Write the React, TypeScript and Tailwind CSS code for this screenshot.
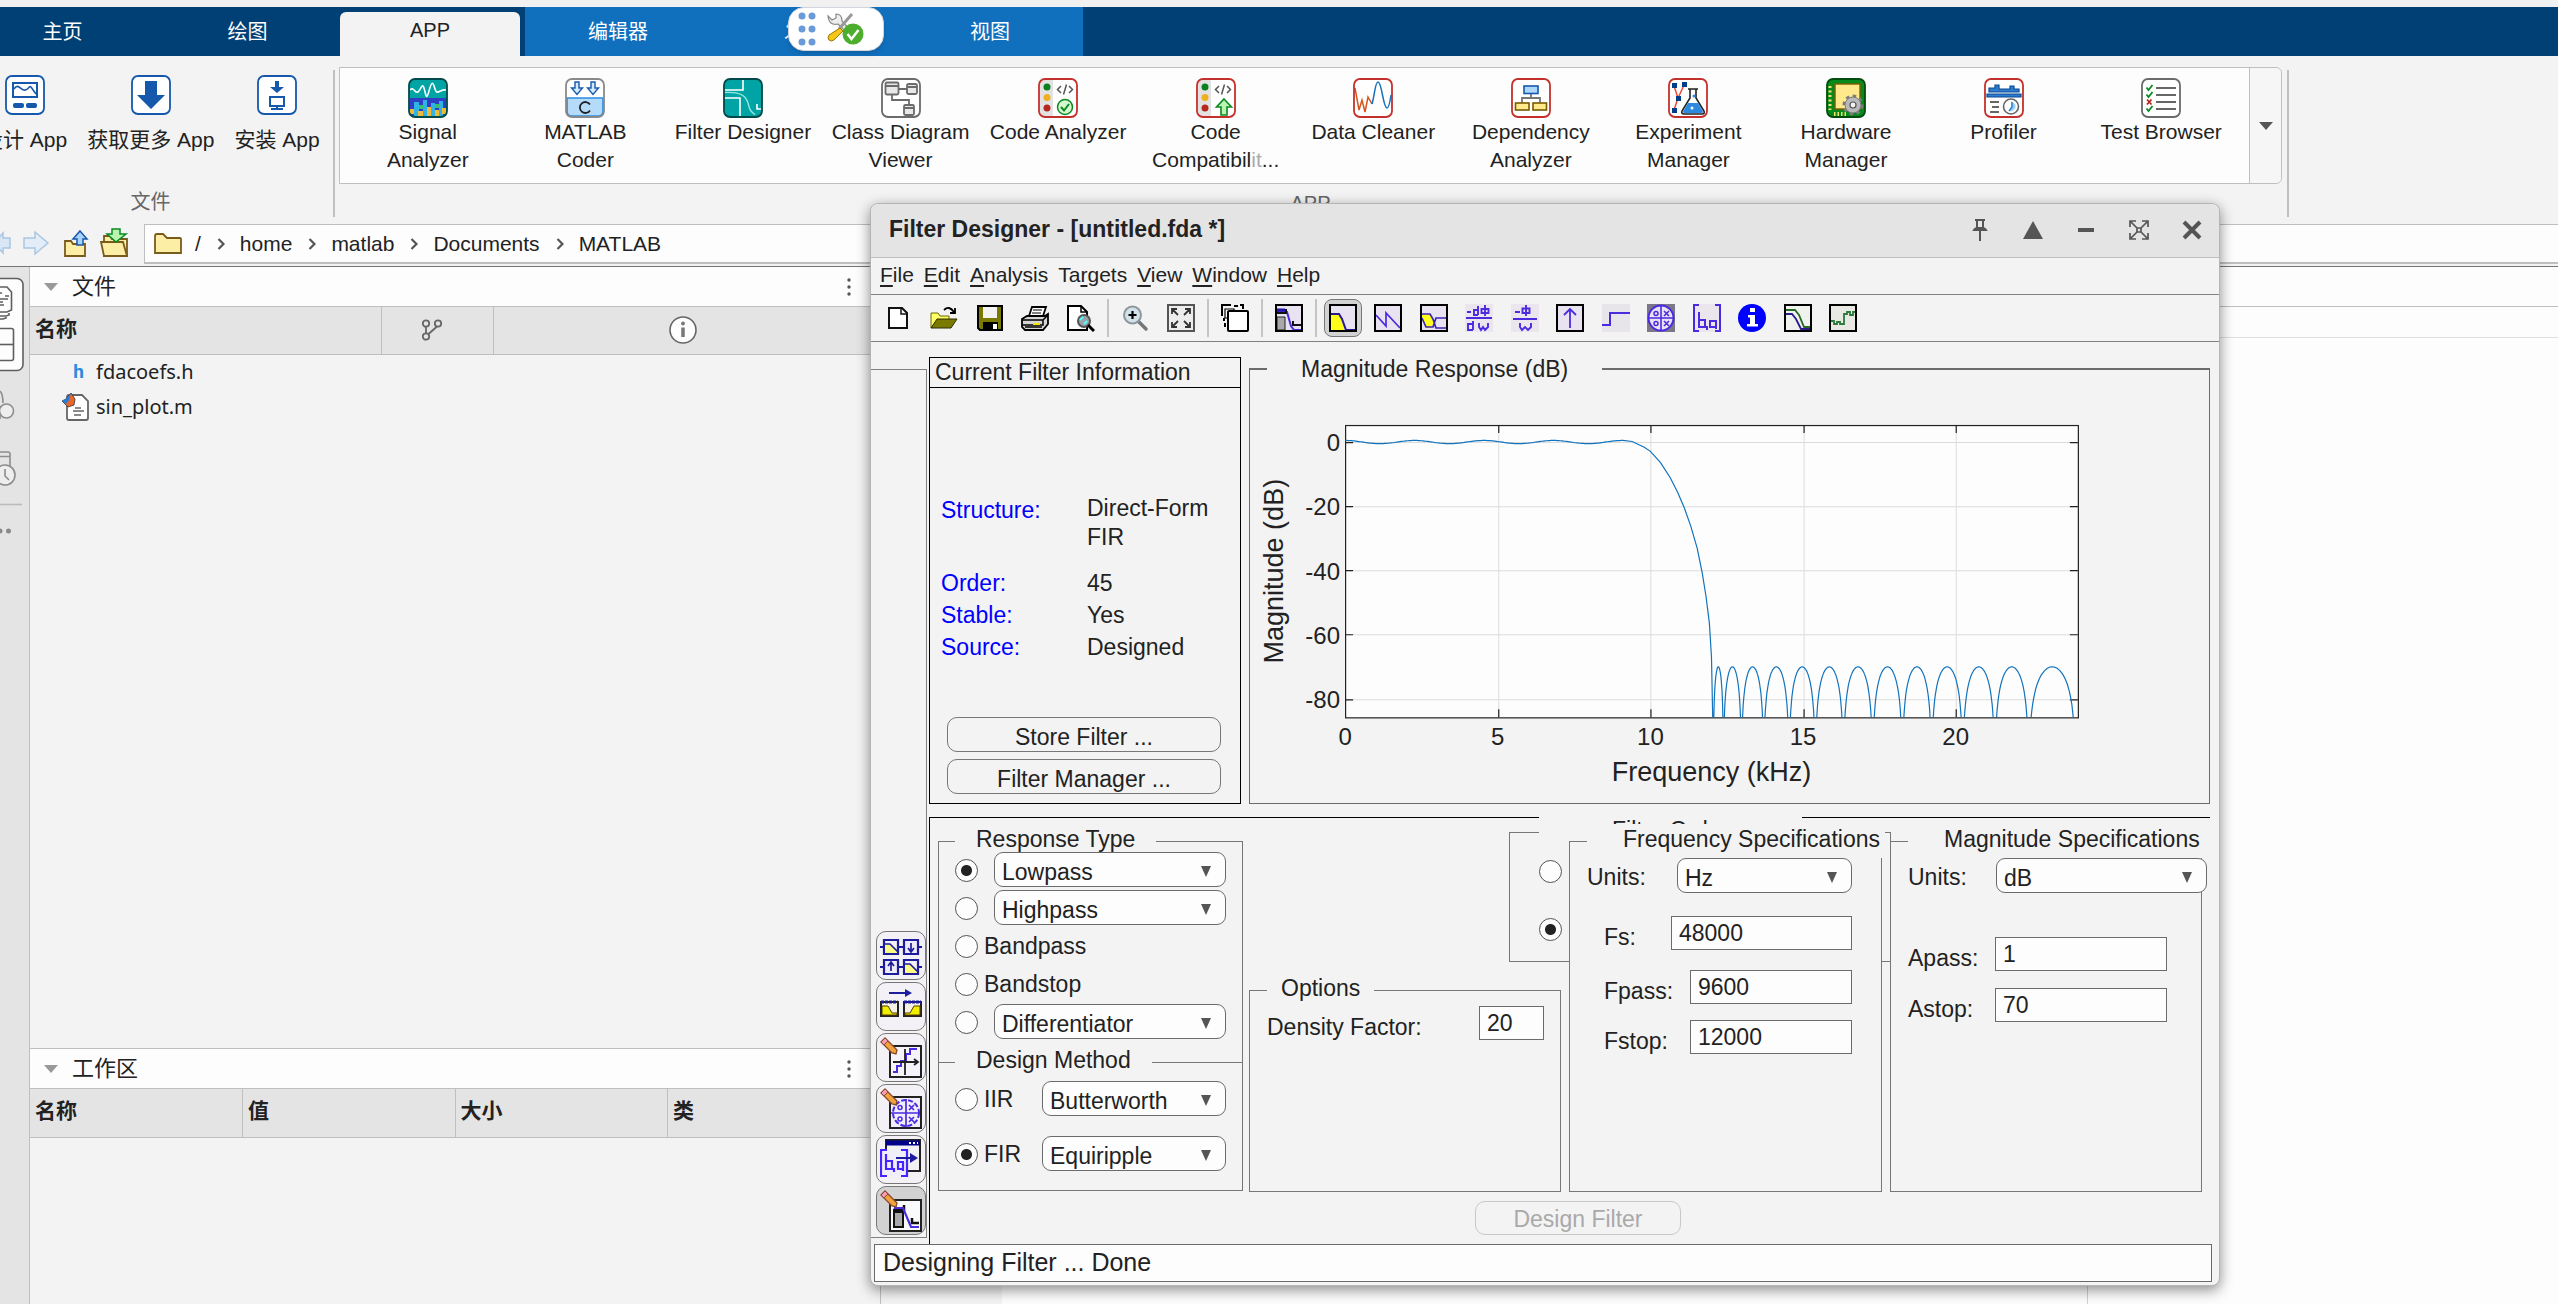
import React from "react";

type Kids = { children?: React.ReactNode };

/* ---------- gallery icons (40 x 40) ---------- */

function Tile({ stroke, fill = "#ffffff", children }: Kids & { stroke: string; fill?: string }) {
  return (
    <svg viewBox="0 0 40 40" className="size-10 shrink-0" fill="none" aria-hidden="true">
      <rect x="1" y="1" width="38" height="38" rx="6" fill={fill} />
      {children}
      <rect x="1" y="1" width="38" height="38" rx="6" stroke={stroke} strokeWidth="1.8" />
    </svg>
  );
}

const Monitor = () => (
  <Tile stroke="#1659ac">
    <rect x="8" y="8" width="24" height="14" stroke="#1659ac" strokeWidth="2" />
    <path d="M9 14c4-6 6 0 10 1s5-5 7-3l5 7" stroke="#1659ac" strokeWidth="1.6" />
    <rect x="8" y="28" width="11" height="5" rx="2" fill="#1659ac" />
    <rect x="21" y="28" width="11" height="5" rx="2" fill="#1659ac" />
  </Tile>
);

const BigArrow = () => (
  <Tile stroke="#1659ac">
    <path d="M14 6h12v14h8L20 34 6 20h8z" fill="#1659ac" />
  </Tile>
);

const Install = () => (
  <Tile stroke="#1659ac">
    <path d="M18 6h4v6h5l-7 6-7-6h5z" fill="#1659ac" />
    <rect x="13" y="22" width="14" height="9" stroke="#1659ac" strokeWidth="2" />
    <path d="M20 31v3M14 34h12" stroke="#1659ac" strokeWidth="2" />
  </Tile>
);

const SignalAnalyzer = () => (
  <Tile stroke="#01494a" fill="#00a4a4">
    <path d="M2 12c4-4 5 4 8 2s4-10 6-4 2 14 5 3 4-9 6-2 5 0 11 1" stroke="#fff" strokeWidth="1.6" />
    <path d="M2 20h36v13q0 5-5 5H7q-5 0-5-5z" fill="#2f3ec4" />
    <path d="M6 24h5v14H6zM15 22h4v16h-4zM23 25h4v13h-4zM31 23h4v15h-4z" fill="#2fb2e4" />
    <path d="M2 31h4v5H2zM10 33h5v5h-5zM19 29h4v9h-4zM27 32h4v6h-4zM34 30h4v6h-4z" fill="#efb93a" />
    <path d="M11 27h4v4h-4zM27 26h4v4h-4z" fill="#36c06e" />
  </Tile>
);

const Coder = () => (
  <Tile stroke="#8a8a8a">
    <path d="M2 20h36v13q0 5-5 5H7q-5 0-5-5z" fill="#b4dcfa" stroke="#2b8ae0" strokeWidth="1.6" />
    <path d="M10 4h4v6h3.5L12 16.5 6.5 10H10zM26 4h4v6h3.5L28 16.5 22.5 10H26z" fill="#d4e9fb" stroke="#1659ac" strokeWidth="1.4" />
    <path d="M25 26.5a5.5 5.5 0 1 0 0 6" stroke="#222" strokeWidth="1.8" />
  </Tile>
);

const FilterApp = () => (
  <Tile stroke="#01494a" fill="#00a4a4">
    <path d="M1 12h19V2" stroke="#fff" strokeWidth="1.6" />
    <path d="M1 20h16v19" stroke="#fff" strokeWidth="1.6" />
    <path d="M1 14.5c20-1 23 5 25 14 1 5 3 6 6 8" stroke="#8fe8e4" strokeWidth="1.4" />
    <path d="M34 26v5h5" stroke="#fff" strokeWidth="1.6" />
  </Tile>
);

const ClassDiagram = () => (
  <Tile stroke="#6b6b6b">
    <g stroke="#6b6b6b" strokeWidth="1.8">
      <rect x="4.5" y="4.5" width="13" height="12" rx="1.5" fill="#e8e8e8" />
      <rect x="26" y="6" width="10" height="10" rx="1.5" fill="#e8e8e8" />
      <rect x="23" y="27" width="10" height="10" rx="1.5" fill="#e8e8e8" />
      <path d="M4.500 8h13M26 9h10M23 30h10M18 11h8M11 17v5h17v5" />
    </g>
  </Tile>
);

const Lights = () => (
  <>
    <path d="M6 2h9v36H6q-4-1-4-5V7q0-4 4-5z" fill="#e2e2e2" />
    <circle cx="9" cy="9" r="3.5" fill="#0a7f1f" />
    <circle cx="9" cy="19.5" r="3.5" fill="#efb020" />
    <circle cx="9" cy="30" r="3.5" fill="#b5281f" />
    <path d="M23 8l-3.500 3.500L23 15M31 8l3.500 3.500L31 15M28.500 6.500l-3 10" stroke="#555" strokeWidth="1.5" />
  </>
);

const CodeAnalyzer = () => (
  <Tile stroke="#c4312c">
    <Lights />
    <circle cx="27" cy="29" r="7.5" fill="#d5f7d0" stroke="#0a8a22" strokeWidth="1.5" />
    <path d="M23 29l3 3.500 5-6.500" stroke="#0a8a22" strokeWidth="2" />
  </Tile>
);

const CodeCompat = () => (
  <Tile stroke="#c4312c">
    <Lights />
    <path d="M28 21l7.500 8H31v8h-6v-8h-4.500z" fill="#b9f5b0" stroke="#0a8a22" strokeWidth="1.6" />
  </Tile>
);

const DataCleaner = () => (
  <Tile stroke="#c4312c">
    <path d="M2 10l4 22 3-10 3 12 3-15 4 7" stroke="#d8531a" strokeWidth="1.5" />
    <path d="M19 26c3-10 3-22 6-22 4 0 5 26 9 26 2 0 3-6 4-13" stroke="#1672ba" strokeWidth="1.5" />
  </Tile>
);

const Dependency = () => (
  <Tile stroke="#c4312c">
    <path d="M20 15v5M11 25v-5h18v5" stroke="#777" strokeWidth="1.8" />
    <rect x="13" y="8" width="14" height="7.5" fill="#aed8fb" stroke="#1659ac" strokeWidth="1.6" />
    <rect x="4.5" y="25" width="13.5" height="7" fill="#ffe98a" stroke="#7a5b00" strokeWidth="1.6" />
    <rect x="22" y="25" width="13.5" height="7" fill="#ffe98a" stroke="#7a5b00" strokeWidth="1.6" />
  </Tile>
);

const Experiment = () => (
  <Tile stroke="#c4312c">
    <path d="M6 8l4 12 7-15M10 20L6 32" stroke="#f04a32" strokeWidth="1.5" />
    <path d="M4 5h5v5H4zM14 4h5v5h-5zM8 18h5v5H8zM4 30h5v5H4z" fill="#003f87" />
    <path d="M20 11h10M22 11v9l-8 13q-1 3 2 3h18q3 0 2-3l-8-13v-9" fill="#fff" stroke="#222" strokeWidth="1.6" />
    <path d="M20 25h10l5 8.500q0 1.500-1.500 1.500h-17q-1.500 0-1.500-1.500z" fill="#2b8ae0" />
    <circle cx="26" cy="18" r="1.5" fill="#2b8ae0" />
    <circle cx="24" cy="30" r="1.5" fill="#fff" />
  </Tile>
);

const Gear = () => (
  <>
    <circle cx="27" cy="27" r="8" stroke="#7c7c7c" strokeWidth="5" strokeDasharray="3.1 3.1" />
    <circle cx="27" cy="27" r="8" fill="#b9b9b9" stroke="#7c7c7c" strokeWidth="1" />
    <circle cx="27" cy="27" r="3" fill="#f2f2f2" stroke="#555" strokeWidth="1.2" />
  </>
);

const Hardware = () => (
  <Tile stroke="#024d0d" fill="#078a1c">
    <rect x="9" y="6" width="25" height="25" fill="#ffe98a" stroke="#7a5b00" strokeWidth="1.4" />
    <path d="M4 8v24" stroke="#f2e36a" strokeWidth="3" strokeDasharray="2 2.5" />
    <path d="M8 36h14" stroke="#f2e36a" strokeWidth="4" strokeDasharray="1.5 2" />
    <Gear />
  </Tile>
);

const Profiler = () => (
  <Tile stroke="#c4312c">
    <path d="M3 19v-3h34v3zM5 14v-4h6V7h4v4h11V8h4v3h5v3z" fill="#2b7dd0" stroke="#0c4a92" strokeWidth="1.2" />
    <path d="M6 24h9M8 29h7M6 34h9" stroke="#666" strokeWidth="1.8" />
    <circle cx="27" cy="28.5" r="7.5" fill="#fff" stroke="#666" strokeWidth="1.6" />
    <path d="M27 23v6l-2 4a5 5 0 0 0 6-7z" fill="#9dd0f8" />
    <path d="M28 24v5l-3 4" stroke="#2b7dd0" strokeWidth="1.4" />
  </Tile>
);

const TestBrowser = () => (
  <Tile stroke="#6b6b6b">
    <path d="M15 10h20M15 17h20M15 24h20M15 31h20" stroke="#666" strokeWidth="1.8" />
    <path d="M5.500 9.500l2 2.500 4-5M5.500 16.500l2 2.500 4-5M5.500 30.500l2 2.500 4-5" stroke="#0a8a22" strokeWidth="1.8" />
    <path d="M6 21.500l4.500 5M10.500 21.500l-4.500 5" stroke="#b5281f" strokeWidth="1.8" />
  </Tile>
);

/* ---------- filter designer toolbar icons (28 x 28) ---------- */

function Ico({ children }: Kids) {
  return (
    <svg viewBox="0 0 28 28" className="size-7" fill="none" aria-hidden="true">
      {children}
    </svg>
  );
}

const P = "#4a2be0";
const Framed = ({ children, fill = "#e9e3f1" }: Kids & { fill?: string }) => (
  <Ico>
    <rect x="1" y="1" width="26" height="26" fill={fill} />
    {children}
    <rect x="1" y="1" width="26" height="26" stroke="#000" strokeWidth="2" />
  </Ico>
);

const NewIcon = () => (
  <Ico>
    <path d="M5 4h13l5 5v15H5z" fill="#fff" stroke="#111" strokeWidth="2" />
    <path d="M17 4v6h6" stroke="#111" strokeWidth="1.5" />
  </Ico>
);
const OpenIcon = () => (
  <Ico>
    <path d="M1 24V9h7l2 3h9v4H8z" fill="#ffff66" stroke="#6b6b00" />
    <path d="M1 24l6-9h20l-6 9z" fill="#7a7a00" stroke="#2d2d00" />
    <path d="M14 6q5-5 10 2M25 4v5h-5" stroke="#000" strokeWidth="1.8" />
  </Ico>
);
const SaveIcon = () => (
  <Ico>
    <path d="M2 2h24v24H4l-2-2z" fill="#7a7a00" stroke="#000" strokeWidth="2" />
    <path d="M7 3h14v11H7z" fill="#f3f3f3" />
    <path d="M7 18h15v9H7z" fill="#000" />
    <path d="M17 20h4v5h-4z" fill="#fff" />
  </Ico>
);
const PrintIcon = () => (
  <Ico>
    <path d="M8 12l3-9h14l-3 9z" fill="#fff" stroke="#000" strokeWidth="1.8" />
    <path d="M12 6h9M11 9h9" stroke="#000" />
    <path d="M1 15l5-3h18l3-2v10l-5 6H4l-3-3z" fill="#d5d5d5" stroke="#000" strokeWidth="1.8" />
    <path d="M1 16h21v5H1M22 16l5-5M4 23h17" stroke="#000" strokeWidth="1.5" />
    <path d="M12 19h7v2h-7z" fill="#f3e600" />
  </Ico>
);
const PreviewIcon = () => (
  <Ico>
    <path d="M1 2h13l6 6v18H1z" fill="#fff" stroke="#000" strokeWidth="2" />
    <path d="M14 2v6h6" stroke="#000" strokeWidth="1.5" />
    <circle cx="17" cy="17" r="6" fill="#9aa4a8" stroke="#555" strokeWidth="2" />
    <path d="M13 16l3-3M17 20l3-3" stroke="#5ff" strokeWidth="2" />
    <path d="M21 21l6 6" stroke="#000" strokeWidth="3" />
  </Ico>
);
const ZoomIcon = () => (
  <Ico>
    <path d="M17 17l8 8" stroke="#777" strokeWidth="3.5" strokeLinecap="round" />
    <circle cx="11.5" cy="11" r="8.5" fill="#d3e2ea" stroke="#8d979c" strokeWidth="2" />
    <path d="M11.500 7v8M7.500 11h8" stroke="#000" strokeWidth="2.2" />
  </Ico>
);
const FitIcon = () => (
  <Ico>
    <rect x="1" y="1" width="26" height="26" fill="#ececec" stroke="#555" strokeWidth="2" />
    <path d="M5 10V5h5M18 5h5v5M23 18v5h-5M10 23H5v-5M5 5l6 6M23 5l-6 6M23 23l-6-6M5 23l6-6" stroke="#333" strokeWidth="1.8" />
  </Ico>
);
const StackIcon = () => (
  <Ico>
    <path d="M1 12V1h9M13 2h4M19 1h3v4M3 14v3M4 19v4" stroke="#000" strokeWidth="2" />
    <path d="M4 5h9v3H7v6H4z" fill="#fff" stroke="#000" strokeWidth="1.2" />
    <rect x="7" y="7" width="20" height="20" rx="1" fill="#fff" stroke="#000" strokeWidth="2" />
  </Ico>
);
const SpecIcon = () => (
  <Framed>
    <path d="M2 8h10l4 14 3 4h7" stroke={P} strokeWidth="2" />
    <path d="M2 13h8v13H2z" fill="#a8a8a8" stroke="#222" />
    <path d="M2 9h9V5M18 17v4h8" stroke="#111" strokeWidth="2" />
    <path d="M2 6h8" stroke="#1e16a0" strokeWidth="3" />
  </Framed>
);
const MagIcon = () => (
  <Framed>
    <path d="M2 10h7l3 4 3 12H2z" fill="#ffff1a" />
    <path d="M2 10h8l3 5 4 11h9" stroke="#2a1a90" strokeWidth="2" />
  </Framed>
);
const PhaseIcon = () => (
  <Framed>
    <path d="M2 11l10 11V9l14 15" stroke={P} strokeWidth="1.7" />
  </Framed>
);
const MagPhaseIcon = () => (
  <Framed>
    <path d="M2 10h8l4 8-3 6H6L2 16z" fill="#ffff1a" />
    <path d="M2 10h8l3 5 3 9h10M2 14l4 9h7l3-9h10" stroke="#3b22b8" strokeWidth="1.7" />
  </Framed>
);
const GroupDelayIcon = () => (
  <Ico>
    <rect width="28" height="28" fill="#ebe6ee" />
    <path d="M1 14h26" stroke={P} strokeWidth="2" />
    <path d="M2 8h4M13 2v9M13 6H9v5h4M20 1v11M16.500 5h7v4h-7zM8 17v9M8 20H3v6h5M14 19v4l2 3 2-3 2 3 3-3v-4" stroke={P} strokeWidth="1.9" />
  </Ico>
);
const PhaseDelayIcon = () => (
  <Ico>
    <rect width="28" height="28" fill="#ebe6ee" />
    <path d="M2 15h24" stroke={P} strokeWidth="2" />
    <path d="M4 8h5M15 1v11M11.500 4.500h7v4.500h-7zM9 19v4l2 3 3-3 3 3 3-3v-4" stroke={P} strokeWidth="1.9" />
  </Ico>
);
const ImpulseIcon = () => (
  <Framed>
    <path d="M14 24V5M8 11l6-6 6 6" stroke={P} strokeWidth="1.8" />
  </Framed>
);
const StepIcon = () => (
  <Ico>
    <rect width="28" height="28" fill="#e8e5ea" />
    <path d="M0 21h8V9h20" stroke={P} strokeWidth="2" />
  </Ico>
);
const PoleZeroIcon = () => (
  <Ico>
    <rect width="28" height="28" fill="#7b7788" />
    <circle cx="14" cy="14" r="12.5" fill="#e9e3f1" stroke={P} strokeWidth="2" />
    <path d="M14 1v26M1 14h26M17 7l5 5M22 7l-5 5M17 17l5 5M22 17l-5 5" stroke={P} strokeWidth="1.6" />
    <circle cx="9" cy="9.5" r="2" stroke={P} strokeWidth="1.5" />
    <circle cx="9" cy="19.5" r="2" stroke={P} strokeWidth="1.5" />
  </Ico>
);
const CoefIcon = () => (
  <Ico>
    <rect width="28" height="28" fill="#ebe6ee" />
    <path d="M6 1H1v26h5M22 1h5v26h-5M6 8v15h6v-7H6M14 22v4M24 17h-7v6h6v-6M23 17v8" stroke={P} strokeWidth="2" />
  </Ico>
);
const InfoIcon = () => (
  <Ico>
    <circle cx="14" cy="14" r="14" fill="#0000fe" />
    <path d="M12 4h5v4h-5zM10 11h7v9h3v2.500H9V20h3v-6.500h-2z" fill="#fff" />
  </Ico>
);
const RoundoffIcon = () => (
  <Framed fill="#f0f2ee">
    <path d="M2 6h9l4 5 5 12h6" stroke="#246b24" strokeWidth="1.8" />
    <path d="M2 10h6l4 5 5 10h9" stroke="#2a1a90" strokeWidth="1.8" />
  </Framed>
);
const NoiseIcon = () => (
  <Framed fill="#e9e9e4">
    <path d="M2 17h3v3h3v-2h3v2h4V10h3V8h3v3h3V8h2" stroke="#2c7a3c" strokeWidth="1.8" />
  </Framed>
);

/* ---------- sidebar icons (42 x 42) ---------- */

const Pencil = () => (
  <>
    <path d="M1 5l4-4 12 12-1 4-4-1z" fill="#f0a23c" stroke="#8a4a30" strokeWidth="1.3" />
    <path d="M1 5l4-4 3 3-4 4z" fill="#f59ab0" stroke="#8a4a30" />
  </>
);
const Side = ({ children }: Kids) => (
  <svg viewBox="0 0 42 42" className="size-[42px]" fill="none" aria-hidden="true">
    {children}
  </svg>
);
const N = "#1c1c9c";
const Multirate = () => (
  <Side>
    <path d="M0 12h42M0 32h42" stroke={N} strokeWidth="2" />
    <path d="M4 5h14v14H4zM24 25h14v14H24z" fill="#f3f0f8" stroke={N} strokeWidth="2.2" />
    <path d="M5 9h5l7 7v2H5zM25 29h5l7 7v2H25z" fill="#fbfb86" />
    <path d="M24 5h14v14H24zM4 25h14v14H4z" fill="#eeebfa" stroke={N} strokeWidth="2.2" />
    <path d="M4 9h6l8 8M24 29h6l8 8M31 8v8M28 13l3 4 3-4M11 36v-8M8 31l3-4 3 4" stroke={N} strokeWidth="1.7" />
  </Side>
);
const Transform = () => (
  <Side>
    <path d="M9 7h17" stroke={N} strokeWidth="2" />
    <path d="M25 3l7 4-7 4z" fill={N} />
    <path d="M1 16h17v14H1zM24 16h17v14H24z" fill="#f5f2e4" stroke="#222" strokeWidth="2" />
    <path d="M2 20h6l4 7h5v2H2zM40 20h-6l-4 7h-5v2h15z" fill="#eef000" stroke="#5a3a00" />
    <path d="M1 16h17M24 16h17" stroke={N} strokeWidth="3" strokeDasharray="3 1" />
  </Side>
);
const Quantize = () => (
  <Side>
    <rect x="10" y="9" width="31" height="31" fill="#f5f3fb" stroke="#222" strokeWidth="2" />
    <path d="M13 35h4v-6h4v-5h5v-7h4v-5h7" stroke={P} strokeWidth="2" />
    <path d="M13 25h25M25 38V12M34 22l4 3-4 3" stroke="#222" strokeWidth="1.8" />
    <Pencil />
  </Side>
);
const PzEditor = () => (
  <Side>
    <rect x="10" y="9" width="31" height="31" fill="#f1eefb" stroke="#222" strokeWidth="2" />
    <circle cx="26" cy="25" r="13" stroke={P} strokeWidth="2" strokeDasharray="5 2" />
    <path d="M26 11v28M11 25h29M29 17l5 5M34 17l-5 5M29 29l5 5M34 29l-5 5" stroke={P} strokeWidth="1.7" />
    <circle cx="20" cy="19.5" r="2" stroke={P} strokeWidth="1.5" />
    <circle cx="20" cy="31" r="2" stroke={P} strokeWidth="1.5" />
    <Pencil />
  </Side>
);
const Import = () => (
  <Side>
    <rect x="6" y="1" width="34" height="31" fill="#f1f1f4" stroke="#222" strokeWidth="2" />
    <path d="M6 4h34" stroke="#00008a" strokeWidth="5" />
    <path d="M29 4h2M33 4h2M37 4h1" stroke="#fff" strokeWidth="2" />
    <path d="M1 11h26v26H1z" fill="#f1eefb" />
    <path d="M7 11H1v26h6M21 11h6v26h-6M6 15v15h6v-8H6M14 29v4M24 23h-6v7h5v-7M23 23v9" stroke="#4524ff" strokeWidth="2.2" />
    <path d="M16 19h16" stroke={N} strokeWidth="2" />
    <path d="M30 14l8 5-8 5z" fill={N} />
  </Side>
);
const DesignIcon = () => (
  <Side>
    <rect x="10" y="10" width="31" height="31" fill="#fafafc" stroke="#222" strokeWidth="2" />
    <path d="M14 22h9v15h-9z" fill="#aaa" stroke="#111" strokeWidth="2" />
    <path d="M13 20h11v-5M32 28v5h7" stroke="#111" strokeWidth="2.5" />
    <path d="M14 18h9l8 19h8" stroke={P} strokeWidth="2.2" />
    <Pencil />
  </Side>
);

/* ---------- data ---------- */

const tabs = ["主页", "绘图", "APP", "编辑器", "发布", "视图"];

const apps: [() => React.ReactElement, string, string?][] = [
  [SignalAnalyzer, "Signal", "Analyzer"],
  [Coder, "MATLAB", "Coder"],
  [FilterApp, "Filter Designer"],
  [ClassDiagram, "Class Diagram", "Viewer"],
  [CodeAnalyzer, "Code Analyzer"],
  [CodeCompat, "Code", "Compatibilit..."],
  [DataCleaner, "Data Cleaner"],
  [Dependency, "Dependency", "Analyzer"],
  [Experiment, "Experiment", "Manager"],
  [Hardware, "Hardware", "Manager"],
  [Profiler, "Profiler"],
  [TestBrowser, "Test Browser"],
];

const crumbs = ["/", "home", "matlab", "Documents", "MATLAB"];

/* ---------- desktop parts ---------- */

function TabBar() {
  return (
    <nav className="relative flex h-14 shrink-0 border-t-[7px] border-[#f1f1f1] bg-[#004074] text-[20px] text-white">
      <div className="-ml-[30px] flex">
        {tabs.map((t, i) =>
          t === "APP" ? (
            <button key={t} className="mt-[5px] mr-[5px] w-[180px] rounded-t-md bg-[#f3f3f3] pb-[9px] text-[#222]">
              {t}
            </button>
          ) : (
            <button key={t} className={i > 2 ? "w-[186px] bg-[#1170be]" : "w-[185px]"}>
              {t}
            </button>
          )
        )}
      </div>
      <div className="absolute top-0 left-[788px] flex h-11 w-24 items-center gap-2 rounded-2xl border border-gray-300 bg-white pl-2 shadow-md">
        <svg viewBox="0 0 20 36" className="h-9 w-5 shrink-0" fill="#6a9bd8" aria-hidden="true">
          {[5, 18, 31].map((y) => (
            <React.Fragment key={y}>
              <circle cx="5" cy={y} r="3.5" />
              <circle cx="15" cy={y} r="3.5" />
            </React.Fragment>
          ))}
        </svg>
        <svg viewBox="0 0 40 34" className="h-[34px] w-10 shrink-0" fill="none" aria-hidden="true">
          <path d="M3 4l4 4 4-2V2q6 0 6 7l9 10-3 3L13 12q-9 2-10-8z" fill="#eee" stroke="#888" strokeWidth="1.2" />
          <path d="M27 2l-13 15" stroke="#999" strokeWidth="3" />
          <path d="M15 16l3 3-9 9q-3 2-5 0t0-5z" fill="#f5c518" stroke="#9a7a00" />
          <circle cx="28" cy="22" r="10.5" fill="#4cae2c" />
          <path d="M22.500 22l4 5 7-9" stroke="#fff" strokeWidth="2.5" />
        </svg>
      </div>
    </nav>
  );
}

function FileButton({ icon, label }: { icon: React.ReactNode; label: string }) {
  return (
    <button className="flex flex-col items-center gap-[11px] whitespace-nowrap text-[21px] leading-7">
      {icon}
      {label}
    </button>
  );
}

function Toolstrip() {
  return (
    <div className="flex h-[166px] shrink-0 bg-[#f3f3f3] text-[21px]">
      <div className="-ml-[18px] flex w-[351px] shrink-0 flex-col items-center">
        <div className="flex w-full gap-5 pt-[19px]">
          <FileButton icon={<Monitor />} label="设计 App" />
          <FileButton icon={<BigArrow />} label="获取更多 App" />
          <FileButton icon={<Install />} label="安装 App" />
        </div>
        <div className="mt-auto mb-[6px] pr-[14px] text-[20px] leading-7 text-[#666]">文件</div>
      </div>
      <div className="mt-[14px] h-[147px] w-0.5 shrink-0 bg-[#bfbfbf]" />
      <div className="flex w-[1947px] shrink flex-col pt-[11px] pl-1">
        <div className="flex h-[117px] rounded-r-md border border-[#bfbfbf] bg-[#fdfdfd]">
          <div className="flex flex-1 px-[9px]">
            {apps.map(([Icon, a, b]) => (
              <button key={a} className="flex flex-1 basis-0 flex-col items-center pt-[10px] leading-7 whitespace-nowrap">
                <Icon />
                <span>{a}</span>
                {b === "Compatibilit..." ? (
                  <span>
                    Compatibil<span className="text-[#aaa]">it</span>...
                  </span>
                ) : (
                  <span>{b}</span>
                )}
              </button>
            ))}
          </div>
          <button className="flex w-8 items-center justify-center rounded-r-md border-l border-[#bfbfbf] bg-[#f6f6f6]" aria-label="更多">
            <svg viewBox="0 0 14 8" className="h-2 w-[14px]" fill="#555" aria-hidden="true">
              <path d="M0 0h14L7 8z" />
            </svg>
          </button>
        </div>
        <div className="pt-[5px] text-center text-[20px] leading-7 text-[#666]">APP</div>
      </div>
      <div className="mt-[14px] ml-[5px] h-[147px] w-0.5 shrink-0 bg-[#bfbfbf]" />
    </div>
  );
}

const Folder = () => (
  <svg viewBox="0 0 30 24" className="h-6 w-[30px] shrink-0" fill="none" aria-hidden="true">
    <path d="M2 4q0-2 2-2h6l4 4h13q1 0 1 1v14H2z" fill="#fdeea6" stroke="#7a5b1c" strokeWidth="1.8" />
  </svg>
);

function PathBar() {
  return (
    <div className="flex h-[45px] shrink-0 items-center border-b border-[#757575] bg-[#f3f3f3] text-[21px]">
      <svg viewBox="0 0 130 32" className="h-8 w-[130px] shrink-0" fill="none" aria-hidden="true">
        <path d="M-6 15L3 5v5h7v10H3v5z" fill="#d9e7f4" stroke="#a9c6e4" strokeWidth="1.5" />
        <path d="M24 10h11V4l13 11-13 11v-6H24z" fill="#e2edf7" stroke="#a9c6e4" strokeWidth="1.5" />
        <path d="M65 13h6l2 3h12v12H65z" fill="#fdeea6" stroke="#7a5b1c" strokeWidth="1.8" />
        <path d="M80 3l7 8h-4v6h-6v-6h-4z" fill="#a8d2fa" stroke="#1659ac" strokeWidth="1.5" />
        <path d="M104 28V8h6l2 3h15v17z" fill="#fdeea6" stroke="#7a5b1c" strokeWidth="1.8" />
        <path d="M104 28l-3-14h22l4 14z" fill="#fdeea6" stroke="#7a5b1c" strokeWidth="1.8" />
        <path d="M112 1h8v5h6l-10 8-9-8h5z" fill="#b9f5b0" stroke="#0a8a22" strokeWidth="1.5" />
      </svg>
      <div className="ml-[14px] flex h-10 flex-1 items-center border-t border-b-2 border-l border-[#bfbfbf] bg-[#fdfdfd] pl-2">
        <Folder />
        <ol className="flex items-center pl-3">
          {crumbs.map((c, i) => (
            <li key={c} className="flex items-center">
              {i > 0 && (
                <svg viewBox="0 0 8 12" className="mr-[15px] ml-4 h-3 w-2" fill="none" aria-hidden="true">
                  <path d="M1.500 1l5 5-5 5" stroke="#555" strokeWidth="2.2" />
                </svg>
              )}
              <a href="#" className="leading-7">
                {c}
              </a>
            </li>
          ))}
        </ol>
      </div>
    </div>
  );
}

function PanelHead({ title }: { title: string }) {
  return (
    <div className="flex h-10 shrink-0 items-center border-b border-[#bfbfbf] bg-[#fdfdfd] pr-[29px] pl-[14px] text-[22px]">
      <svg viewBox="0 0 14 8" className="h-2 w-[14px]" fill="#999" aria-hidden="true">
        <path d="M0 0h14L7 8z" />
      </svg>
      <h2 className="ml-[14px] flex-1">{title}</h2>
      <button aria-label={title + "菜单"}>
        <svg viewBox="0 0 4 20" className="h-5 w-1" fill="#555" aria-hidden="true">
          <circle cx="2" cy="3" r="1.7" />
          <circle cx="2" cy="10" r="1.7" />
          <circle cx="2" cy="17" r="1.7" />
        </svg>
      </button>
    </div>
  );
}

const BranchIcon = () => (
  <svg viewBox="0 0 24 24" className="inline size-6" fill="none" stroke="#666" strokeWidth="1.8" aria-hidden="true">
    <circle cx="6" cy="5.5" r="3.2" />
    <circle cx="18" cy="5.5" r="3.2" />
    <circle cx="6" cy="18.5" r="3.2" />
    <path d="M6 9v6M17 8.500L8.500 16" />
  </svg>
);

function FilesPanel() {
  return (
    <section className="flex flex-1 flex-col">
      <PanelHead title="文件" />
      <table className="w-full table-fixed">
        <thead>
          <tr className="h-[47px] border-b border-[#bfbfbf] bg-[#e4e4e4] text-[21px]">
            <th className="w-[351px] border-r border-[#bfbfbf] pb-1 pl-[5px] text-left">名称</th>
            <th className="w-[112px] border-r border-[#bfbfbf] pr-[10px] pb-1">
              <BranchIcon />
            </th>
            <th className="pr-2 pb-1">
              <svg viewBox="0 0 28 28" className="inline size-7" fill="none" aria-hidden="true">
                <circle cx="14" cy="14" r="13" fill="#fdfdfd" stroke="#666" strokeWidth="1.6" />
                <path d="M14 11.500V21" stroke="#777" strokeWidth="3.5" />
                <circle cx="14" cy="7.5" r="1.9" fill="#777" />
              </svg>
            </th>
          </tr>
        </thead>
        <tbody className="font-['Noto_Sans',sans-serif] text-[20px]">
          <tr className="h-[35px]">
            <td className="pl-8">
              <div className="flex items-center gap-[7px]">
                <span className="w-[27px] pl-[6px] text-center font-['Roboto',sans-serif] text-[19px] font-bold text-[#2b8ae0]">h</span>
                fdacoefs.h
              </div>
            </td>
            <td />
            <td />
          </tr>
          <tr className="h-[35px]">
            <td className="pl-8">
              <div className="flex items-center gap-[7px]">
                <svg viewBox="0 0 27 28" className="h-7 w-[27px]" fill="none" aria-hidden="true">
                  <path d="M5 4q0-2 2-2h13l6 6v17q0 2-2 2H7q-2 0-2-2z" fill="#fff" stroke="#666" strokeWidth="1.8" />
                  <path d="M13 15h6M11 18h11M12 22h7" stroke="#666" strokeWidth="1.6" />
                  <path d="M0 8l4-2 5-6 4 6-1 6-6 2z" fill="#e8662a" stroke="#333" strokeWidth="0.8" />
                  <path d="M0 8l4-2 5-6-2 7-3 4z" fill="#1f7fe0" />
                </svg>
                sin_plot.m
              </div>
            </td>
            <td />
            <td />
          </tr>
        </tbody>
      </table>
    </section>
  );
}

function WorkspacePanel() {
  return (
    <section className="h-[256px] border-t border-[#bfbfbf]">
      <PanelHead title="工作区" />
      <table className="w-full table-fixed">
        <thead>
          <tr className="h-12 border-b border-[#bfbfbf] bg-[#e4e4e4] text-[21px]">
            {["名称", "值", "大小", "类"].map((h) => (
              <th key={h} className="border-r border-[#bfbfbf] pb-1 pl-[5px] text-left last:border-r-0">
                {h}
              </th>
            ))}
          </tr>
        </thead>
      </table>
    </section>
  );
}

function LeftRail() {
  return (
    <aside className="w-[30px] shrink-0 overflow-hidden border-r border-[#bfbfbf] bg-[#e4e4e4]">
      <svg viewBox="0 0 29 300" className="h-[300px] w-[29px]" fill="none" stroke="#5f5f5f" strokeWidth="1.6" aria-hidden="true">
        <rect x="-20" y="11.5" width="43" height="92" rx="6" fill="#fdfdfd" />
        <path d="M-4 20h11l4.500 5v18L7 45H-4M-4 26h6M0 32h8M-2 38h6M9 46v2l-3 1h-9M6 50v1l-3 1h-6" />
        <path d="M5 29h4M0 35h3" />
        <rect x="-10" y="61.5" width="23.5" height="32" rx="2" />
        <path d="M-4 77.500h17" />
        <g stroke="#8c8c8c">
          <path d="M0 124q3 3 3 12M0 139v13" />
          <circle cx="6.5" cy="144" r="7" fill="#eee" />
          <path d="M-5 185H8q2 0 2 2v12M-5 189.500h15" />
          <circle cx="5" cy="208" r="10" fill="#eee" />
          <path d="M5 202v7l4 4" />
        </g>
        <path d="M0 237.500h22" stroke="#bbb" />
        <circle cx="0" cy="264" r="2.5" fill="#888" stroke="none" />
        <circle cx="8.5" cy="264" r="2.5" fill="#888" stroke="none" />
      </svg>
    </aside>
  );
}

/* ---------- filter designer ---------- */

const field = "border border-[#6b6b6b] bg-[#fdfdfd] pl-[7px] text-[23px] h-[34px] rounded-none outline-none";

function Select({ label, value, className }: { label: string; value: string; className: string }) {
  return (
    <span className={"relative block " + className}>
      <select
        aria-label={label}
        className="h-[35px] w-full appearance-none rounded-[9px] border border-[#6b6b6b] bg-[#fdfdfd] pt-1 pl-[7px] text-[23px] leading-7 outline-none"
      >
        <option>{value}</option>
      </select>
      <svg viewBox="0 0 10 11" className="pointer-events-none absolute top-[14px] right-[15px] h-[11px] w-[10px]" fill="#555" aria-hidden="true">
        <path d="M0 0h10L5 11z" />
      </svg>
    </span>
  );
}

function Radio({ name, label, checked = false, text }: { name: string; label: string; checked?: boolean; text?: boolean }) {
  return (
    <label className="flex items-center gap-[6px]">
      <input
        type="radio"
        name={name}
        aria-label={label}
        defaultChecked={checked}
        className="size-[23px] appearance-none rounded-full border border-[#555] bg-[#fdfdfd] bg-clip-padding checked:bg-[radial-gradient(circle,#222_0,#222_5px,#fdfdfd_6px)]"
      />
      {text && label}
    </label>
  );
}

function Chart() {
  const X = (f: number) => 95 + f * 30.5;
  const Y = (d: number) => 61 - d * 3.208;
  const pts: string[] = [];
  for (let f = 0; f <= 9.1; f += 0.05) {
    pts.push(`${X(f).toFixed(1)},${Y(0.5 * Math.cos((2 * Math.PI * f) / 2.275)).toFixed(1)}`);
  }
  const fall = [
    [9.4, 0.2], [9.8, -1.6], [10, -2.9], [10.33, -6.4], [10.65, -11.1], [10.9, -15.8], [11.11, -20.5],
    [11.32, -26.2], [11.53, -33], [11.7, -40.8], [11.82, -48], [11.93, -56.4], [12, -67], [12.05, -90],
  ];
  fall.forEach(([f, d]) => pts.push(`${X(f).toFixed(1)},${Y(d).toFixed(1)}`));
  const zeros = [12.06, 12.39, 12.98, 13.71, 14.54, 15.4, 16.32, 17.28, 18.25, 19.21, 20.23, 21.28, 22.39, 23.93];
  for (let i = 0; i < zeros.length - 1; i++) {
    for (let k = 0; k <= 60; k++) {
      const t = k / 60;
      const d = Math.max(-100, -70 + 20 * Math.log10(Math.max(1e-6, Math.sin(Math.PI * t))));
      pts.push(`${X(zeros[i] + (zeros[i + 1] - zeros[i]) * t).toFixed(1)},${Y(d).toFixed(1)}`);
    }
  }
  const xs = [5, 10, 15, 20];
  const ys = [0, -20, -40, -60, -80];
  return (
    <svg viewBox="0 0 958 421" className="block w-full" role="img" aria-label="Magnitude Response (dB)">
      <defs>
        <clipPath id="axes">
          <rect x="95" y="44" width="732" height="292" />
        </clipPath>
      </defs>
      <rect x="95" y="44" width="732" height="292" fill="#fdfdfd" />
      <g stroke="#dcdcdc" strokeWidth="1">
        {xs.map((x) => (
          <path key={x} d={`M${Math.round(X(x)) + 0.5} 44V336`} />
        ))}
        {ys.map((y) => (
          <path key={y} d={`M95 ${Math.round(Y(y)) + 0.5}H827`} />
        ))}
      </g>
      <g stroke="#222" strokeWidth="1.2" fill="none">
        {xs.map((x) => (
          <path key={x} d={`M${Math.round(X(x)) + 0.5} 44v8m0 284v-8`} />
        ))}
        {ys.map((y) => (
          <path key={y} d={`M95 ${Math.round(Y(y)) + 0.5}h8m724 0h-8`} />
        ))}
        <rect x="95.5" y="44.5" width="732" height="292" />
      </g>
      <polyline points={pts.join(" ")} fill="none" stroke="#1273bd" strokeWidth="1.2" clipPath="url(#axes)" />
      <g fill="#222" fontSize="24" fontFamily="Liberation Sans, sans-serif">
        {ys.map((y) => (
          <text key={y} x="90" y={Y(y) + 9} textAnchor="end">
            {y}
          </text>
        ))}
        {[0, ...xs].map((x) => (
          <text key={x} x={X(x)} y="364" textAnchor="middle">
            {x}
          </text>
        ))}
        <text x="461" y="400" fontSize="27" textAnchor="middle">
          Frequency (kHz)
        </text>
        <text x="-190" y="33" fontSize="27" textAnchor="middle" transform="rotate(-90)">
          Magnitude (dB)
        </text>
      </g>
    </svg>
  );
}

const menus: [string, string, string][] = [
  ["", "F", "ile"],
  ["", "E", "dit"],
  ["", "A", "nalysis"],
  ["Ta", "r", "gets"],
  ["", "V", "iew"],
  ["", "W", "indow"],
  ["", "H", "elp"],
];

function ToolGroup({ items, className, active }: { items: [string, () => React.ReactElement][]; className: string; active?: number }) {
  return (
    <div className={"flex justify-between " + className}>
      {items.map(([name, Icon], i) => (
        <button
          key={name}
          aria-label={name}
          className={
            i === active
              ? "flex h-[38px] w-[38px] items-center justify-center rounded-lg border border-[#777] bg-[#d2d2d2]"
              : "flex h-[38px] w-[38px] items-center justify-center"
          }
        >
          <Icon />
        </button>
      ))}
    </div>
  );
}

const Sep = () => <div className="mx-[7px] h-[38px] w-0.5 bg-[#c4c4c4]" />;

function WindowChrome() {
  return (
    <>
      <header className="flex h-[54px] items-center rounded-t-lg border-b border-[#bfbfbf] bg-[#e4e4e4] pr-[17px] pb-0.5 pl-[18px]">
        <h1 className="flex-1 text-[23px] font-bold">Filter Designer - [untitled.fda *]</h1>
        <div className="flex items-center gap-[33px] text-[#555]">
          <button aria-label="Pin">
            <svg viewBox="0 0 20 24" className="h-6 w-5" fill="none" stroke="currentColor" strokeWidth="2" aria-hidden="true">
              <path d="M5 2h10M7 2v8M13 2v8M4 12q1-2 3-2h6q2 0 3 2zM10 12v11" />
            </svg>
          </button>
          <button aria-label="Shade">
            <svg viewBox="0 0 20 18" className="h-[18px] w-5" fill="currentColor" aria-hidden="true">
              <path d="M10 0l10 18H0z" />
            </svg>
          </button>
          <button aria-label="Minimize">
            <svg viewBox="0 0 20 20" className="size-5" fill="currentColor" aria-hidden="true">
              <path d="M2 8h16v4H2z" />
            </svg>
          </button>
          <button aria-label="Maximize">
            <svg viewBox="0 0 20 20" className="size-5" fill="none" stroke="currentColor" strokeWidth="1.7" aria-hidden="true">
              <path d="M1 7V1h6M13 1h6v6M19 13v6h-6M7 19H1v-6M1 1l7 7M19 1l-7 7M19 19l-7-7M1 19l7-7M8 8h4v4H8z" />
            </svg>
          </button>
          <button aria-label="Close">
            <svg viewBox="0 0 20 20" className="size-5" fill="none" stroke="currentColor" strokeWidth="4" aria-hidden="true">
              <path d="M2 2l16 16M18 2L2 18" />
            </svg>
          </button>
        </div>
      </header>
      <nav className="flex h-[37px] items-center gap-[10px] border-b border-[#808080] pl-[9px] text-[21px]">
        {menus.map(([a, u, b]) => (
          <button key={u + b} className="pb-0.5 leading-7">
            {a}
            <span className="underline decoration-2 underline-offset-[3px]">{u}</span>
            {b}
          </button>
        ))}
      </nav>
      <div className="flex h-[47px] items-center border-b border-[#808080] pl-[8px]">
        <ToolGroup
          className="w-[221px]"
          items={[["New", NewIcon], ["Open", OpenIcon], ["Save", SaveIcon], ["Print", PrintIcon], ["Print preview", PreviewIcon]]}
        />
        <Sep />
        <ToolGroup className="w-[84px]" items={[["Zoom in", ZoomIcon], ["Full view", FitIcon]]} />
        <Sep />
        <ToolGroup className="w-[38px]" items={[["Full view analysis", StackIcon]]} />
        <Sep />
        <ToolGroup className="w-[38px]" items={[["Filter specifications", SpecIcon]]} />
        <Sep />
        <ToolGroup
          className="w-[538px]"
          active={0}
          items={[
            ["Magnitude response", MagIcon],
            ["Phase response", PhaseIcon],
            ["Magnitude and phase", MagPhaseIcon],
            ["Group delay", GroupDelayIcon],
            ["Phase delay", PhaseDelayIcon],
            ["Impulse response", ImpulseIcon],
            ["Step response", StepIcon],
            ["Pole-zero plot", PoleZeroIcon],
            ["Coefficients", CoefIcon],
            ["Filter information", InfoIcon],
            ["Magnitude estimate", RoundoffIcon],
            ["Noise spectrum", NoiseIcon],
          ]}
        />
      </div>
    </>
  );
}

function InfoBox() {
  return (
    <section className="flex w-[312px] shrink-0 flex-col border border-black">
      <h2 className="h-[30px] border-b border-black pl-[5px] leading-7">Current Filter Information</h2>
      <dl className="mt-[106px] grid grid-cols-[146px_1fr] pl-[11px] leading-[29px]">
        <dt className="pt-0.5 text-[#0000fe]">Structure:</dt>
        <dd className="pb-[17px]">
          Direct-Form
          <br />
          FIR
        </dd>
        <dt className="h-8 text-[#0000fe]">Order:</dt>
        <dd>45</dd>
        <dt className="h-8 text-[#0000fe]">Stable:</dt>
        <dd>Yes</dd>
        <dt className="h-8 text-[#0000fe]">Source:</dt>
        <dd>Designed</dd>
      </dl>
      <div className="mt-auto mr-[19px] mb-[9px] ml-[17px] flex flex-col gap-[7px]">
        <button className="h-[35px] rounded-[10px] border border-[#777] pt-1 leading-7">Store Filter ...</button>
        <button className="h-[35px] rounded-[10px] border border-[#777] pt-1 leading-7">Filter Manager ...</button>
      </div>
    </section>
  );
}

function LabeledInput({ label, value, className, width }: { label: string; value: string; className: string; width: string }) {
  return (
    <label className={"flex items-center justify-between " + className}>
      <span className="pt-2 leading-6">{label}</span>
      <input defaultValue={value} className={field + " " + width} />
    </label>
  );
}

function DesignPanel() {
  return (
    <section className="mt-[13px] flex flex-col border-t border-l border-black">
      <div className="flex pt-[6px] pl-2">
        {/* response type and design method */}
        <div className="mt-[5px] w-[305px] shrink-0">
          <fieldset className="flex flex-col border border-b-0 border-[#777]">
            <legend className="ml-4 px-[21px] pb-1 leading-5">Response Type</legend>
            <div className="flex flex-col gap-[3px] pr-4 pb-[22px] pl-4">
              <div className="flex h-[35px] items-center justify-between">
                <Radio name="type" label="Lowpass" checked />
                <Select label="Lowpass type" value="Lowpass" className="w-[232px]" />
              </div>
              <div className="flex h-[35px] items-center justify-between">
                <Radio name="type" label="Highpass" />
                <Select label="Highpass type" value="Highpass" className="w-[232px]" />
              </div>
              <div className="flex h-[35px] items-center">
                <Radio name="type" label="Bandpass" text />
              </div>
              <div className="flex h-[35px] items-center">
                <Radio name="type" label="Bandstop" text />
              </div>
              <div className="flex h-[35px] items-center justify-between">
                <Radio name="type" label="Differentiator" />
                <Select label="Other type" value="Differentiator" className="w-[232px]" />
              </div>
            </div>
          </fieldset>
          <fieldset className="-mt-3 border border-[#777]">
            <legend className="ml-4 px-[21px] pb-1 leading-5">Design Method</legend>
            <div className="flex flex-col gap-5 px-4 pt-2 pb-[18px]">
              <div className="flex h-[35px] items-center justify-between">
                <Radio name="method" label="IIR" text />
                <Select label="IIR method" value="Butterworth" className="w-[184px]" />
              </div>
              <div className="flex h-[35px] items-center justify-between">
                <Radio name="method" label="FIR" checked text />
                <Select label="FIR method" value="Equiripple" className="w-[184px]" />
              </div>
            </div>
          </fieldset>
        </div>
        {/* filter order and options */}
        <div className="-mt-[7px] ml-[6px] flex w-[312px] shrink-0 flex-col">
          <fieldset className="ml-[260px] h-[145px] w-[382px] border border-[#777]">
            <legend className="ml-[29px] w-[263px] bg-[#f3f3f3] pb-1 pl-[73px] leading-[26px]">Filter Order</legend>
            <div className="flex flex-col gap-[35px] pt-[13px] pl-[29px]">
              <Radio name="order" label="Specify order" />
              <Radio name="order" label="Minimum order" checked />
            </div>
          </fieldset>
          <fieldset className="mt-4 flex-1 border border-[#777]">
            <legend className="ml-[17px] px-[14px] pb-1 leading-5">Options</legend>
            <LabeledInput label="Density Factor:" value="20" className="mt-1 pr-4 pl-[17px]" width="w-[65px]" />
          </fieldset>
        </div>
        {/* frequency */}
        <fieldset className="relative ml-2 w-[313px] min-w-0 shrink-0 border border-[#777] bg-[#f3f3f3]">
          <legend className="ml-[17px] w-[298px] bg-[#f3f3f3] pb-1 pl-[36px] leading-[30px] whitespace-nowrap">Frequency Specifications</legend>
          <div className="flex items-center justify-between pr-[29px] pl-[17px]">
            <span className="leading-6">Units:</span>
            <Select label="Frequency units" value="Hz" className="w-[175px]" />
          </div>
          <LabeledInput label="Fs:" value="48000" className="mt-[21px] pr-[29px] pl-[34px]" width="w-[181px]" />
          <LabeledInput label="Fpass:" value="9600" className="mt-5 pr-[29px] pl-[34px]" width="w-[162px]" />
          <LabeledInput label="Fstop:" value="12000" className="mt-4 pr-[29px] pl-[34px]" width="w-[162px]" />
        </fieldset>
        {/* magnitude */}
        <fieldset className="relative ml-2 h-[368px] w-[312px] min-w-0 shrink-0 border border-[#777] bg-[#f3f3f3]">
          <legend className="ml-[17px] w-[298px] bg-[#f3f3f3] pb-1 pl-[36px] leading-[30px] whitespace-nowrap">Magnitude Specifications</legend>
          <div className="-mr-[6px] flex items-center justify-between pl-[17px]">
            <span className="leading-6">Units:</span>
            <Select label="Magnitude units" value="dB" className="w-[211px]" />
          </div>
          <LabeledInput label="Apass:" value="1" className="mt-[42px] pr-[34px] pl-[17px]" width="w-[172px]" />
          <LabeledInput label="Astop:" value="70" className="mt-[17px] pr-[34px] pl-[17px]" width="w-[172px]" />
        </fieldset>
      </div>
      <div className="flex h-[52px] justify-center pt-[9px] pl-4">
        <button disabled className="h-[34px] w-[206px] rounded-[10px] border border-[#c8c8c8] pt-0.5 leading-7 text-[#a9a9a9]">
          Design Filter
        </button>
      </div>
    </section>
  );
}

const sideTools: [string, () => React.ReactElement][] = [
  ["Create a multirate filter", Multirate],
  ["Transform filter", Transform],
  ["Set quantization parameters", Quantize],
  ["Pole-zero editor", PzEditor],
  ["Import filter", Import],
  ["Design filter", DesignIcon],
];

function FilterDesigner() {
  return (
    <main className="absolute top-[203px] left-[870px] w-[1350px] rounded-lg border border-[#b5b5b5] bg-[#f3f3f3] text-[23px] text-[#222] shadow-[0_4px_14px_rgba(0,0,0,0.45)]">
      <WindowChrome />
      <div className="flex">
        <div className="mt-[27px] mb-[6px] flex w-14 shrink-0 flex-col justify-end gap-[2px] border-t border-r border-b border-[#808080] pb-0.5 pl-[5px]">
          {sideTools.map(([name, Icon], i) => (
            <button
              key={name}
              aria-label={name}
              className={
                i === 5
                  ? "flex h-[49px] items-center justify-center rounded-[10px] border border-[#777] bg-[#d2d2d2]"
                  : "flex h-[49px] items-center justify-center rounded-[10px] border border-[#777] bg-[#f3f1f6]"
              }
            >
              <Icon />
            </button>
          ))}
        </div>
        <div className="ml-0.5 min-w-0 flex-1 pt-[15px] pr-[9px]">
          <div className="flex h-[447px] gap-2">
            <InfoBox />
            <fieldset className="min-w-0 flex-1 border border-t-2 border-[#6b6b6b]">
              <legend className="ml-[17px] px-[34px] leading-6">Magnitude Response (dB)</legend>
              <Chart />
            </fieldset>
          </div>
          <DesignPanel />
        </div>
      </div>
      <output className="mr-[7px] mb-[3px] ml-[3px] block h-[38px] border border-[#6b6b6b] bg-[#fdfdfd] pl-2 text-[25px] leading-[34px]">
        Designing Filter ... Done
      </output>
    </main>
  );
}

export default function App() {
  return (
    <div className="relative flex min-h-screen flex-col overflow-hidden bg-[#f3f3f3] font-['Liberation_Sans','Noto_Sans_CJK_SC',sans-serif] text-[#222]">
      <TabBar />
      <Toolstrip />
      <PathBar />
      <div className="flex flex-1">
        <LeftRail />
        <div className="flex w-[851px] shrink-0 flex-col border-r border-[#bfbfbf]">
          <FilesPanel />
          <WorkspacePanel />
        </div>
        <div className="flex flex-1 flex-col bg-[#fdfdfd]">
          <div className="h-10 border-b border-[#bfbfbf]" />
          <div className="h-[31px] border-b border-[#e0e0e0]" />
          <div className="flex flex-1">
            <div className="w-[121px] bg-[#f3f3f3]" />
            <div className="flex-1 border-r border-[#d0d0d0]" />
            <div className="w-[470px]" />
          </div>
        </div>
      </div>
      <FilterDesigner />
    </div>
  );
}
